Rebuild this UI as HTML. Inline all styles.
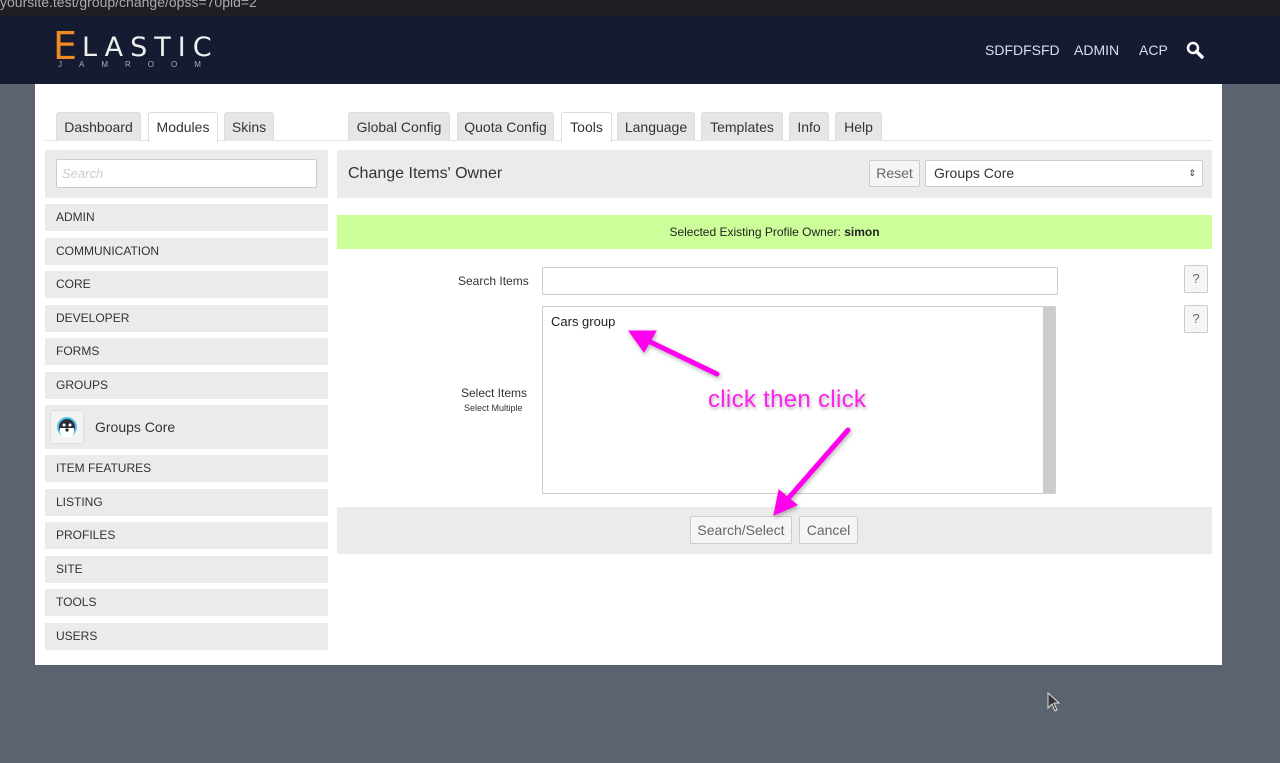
<!DOCTYPE html>
<html><head><meta charset="utf-8"><style>
*{box-sizing:border-box;margin:0;padding:0}
body{width:1280px;height:763px;background:#5c6370;position:relative;overflow:hidden;font-family:"Liberation Sans",sans-serif;font-size:13px;color:#333}
.a{position:absolute}
.top{left:0;top:0;width:1280px;height:16px;background:#1f1e24;color:#888;font-size:14px;overflow:hidden}
.hdr{left:0;top:16px;width:1280px;height:68px;background:#151c32}
.nav{color:#dde;font-size:14px;top:42px}
.panel{left:35px;top:84px;width:1187px;height:581px;background:#fff}
.tab{top:112px;height:29px;background:#e6e6e6;border:1px solid #ddd;border-bottom:none;border-radius:3px 3px 0 0;font-size:14px;line-height:28px;text-align:center;color:#333}
.tab.act{background:#fff;height:30px}
.side{left:45px;width:283px;height:27px;background:#ebebeb;font-size:12px;line-height:27px;padding-left:11px;color:#333}
.btn{background:#f5f5f5;border:1px solid #ccc;border-radius:2px;color:#666;text-align:center;font-size:14px}
.inp{background:#fff;border:1px solid #ccc;border-radius:2px}
</style></head><body>
<div class="a top"><span style="position:absolute;left:0;top:-6px;color:#aaa">yoursite.test/group/change/opss=70pid=2</span></div>
<div class="a hdr"></div>
<div class="a" style="left:53px;top:24px;color:#f08a24;font-size:38px;font-family:'DejaVu Sans',sans-serif">E</div>
<div class="a" style="left:82px;top:32px;color:#eee;font-size:27px;letter-spacing:7px;font-family:'DejaVu Sans',sans-serif">LASTIC</div>
<div class="a" style="left:58px;top:60px;color:#aab;font-size:8px;letter-spacing:17px">JAMROOM</div>
<div class="a nav" style="left:985px">SDFDFSFD</div>
<div class="a nav" style="left:1074px">ADMIN</div>
<div class="a nav" style="left:1139px">ACP</div>
<svg class="a" style="left:1186px;top:41px" width="18" height="18" viewBox="0 0 18 18"><circle cx="7" cy="7" r="5" fill="none" stroke="#fff" stroke-width="2.5"/><path d="M10.5 10.5L16 16" stroke="#fff" stroke-width="3.5" stroke-linecap="round"/></svg>
<div class="a panel"></div>
<div class="a" style="left:45px;top:140px;width:1167px;height:1px;background:#e4e4e4"></div>
<div class="a tab" style="left:56px;width:85px">Dashboard</div>
<div class="a tab act" style="left:148px;width:70px">Modules</div>
<div class="a tab" style="left:224px;width:50px">Skins</div>
<div class="a tab" style="left:348px;width:102px">Global Config</div>
<div class="a tab" style="left:457px;width:97px">Quota Config</div>
<div class="a tab act" style="left:561px;width:51px">Tools</div>
<div class="a tab" style="left:617px;width:78px">Language</div>
<div class="a tab" style="left:701px;width:82px">Templates</div>
<div class="a tab" style="left:789px;width:40px">Info</div>
<div class="a tab" style="left:835px;width:47px">Help</div>
<div class="a" style="left:45px;top:150px;width:283px;height:48px;background:#ebebeb"></div>
<div class="a inp" style="left:56px;top:159px;width:261px;height:29px;color:#ccc;font-size:13px;padding:6px 5px;font-style:italic">Search</div>
<div class="a side" style="top:204px">ADMIN</div>
<div class="a side" style="top:238px">COMMUNICATION</div>
<div class="a side" style="top:271px">CORE</div>
<div class="a side" style="top:305px">DEVELOPER</div>
<div class="a side" style="top:338px">FORMS</div>
<div class="a side" style="top:372px">GROUPS</div>
<div class="a side" style="top:405px;height:44px;font-size:14px;line-height:44px;padding-left:50px">Groups Core</div>
<div class="a" style="left:50px;top:410px;width:34px;height:34px;background:#f3f3f3;border:1px solid #ddd;border-radius:3px"></div>
<svg class="a" style="left:57px;top:417px" width="20" height="20" viewBox="0 0 20 20"><circle cx="10" cy="10" r="9" fill="#2a2f3a" stroke="#5bc0eb" stroke-width="2"/><path d="M3 11h14v3a7 7 0 0 1-14 0z" fill="#fff"/><circle cx="7" cy="8" r="1.5" fill="#fff"/><circle cx="13" cy="8" r="1.5" fill="#fff"/><circle cx="10" cy="13" r="1.6" fill="#222"/></svg>
<div class="a side" style="top:455px">ITEM FEATURES</div>
<div class="a side" style="top:489px">LISTING</div>
<div class="a side" style="top:522px">PROFILES</div>
<div class="a side" style="top:556px">SITE</div>
<div class="a side" style="top:589px">TOOLS</div>
<div class="a side" style="top:623px">USERS</div>
<div class="a" style="left:337px;top:150px;width:875px;height:48px;background:#ebebeb"></div>
<div class="a" style="left:348px;top:165px;font-size:16px;color:#333">Change Items' Owner</div>
<div class="a btn" style="left:869px;top:160px;width:51px;height:27px;line-height:25px">Reset</div>
<div class="a inp" style="left:925px;top:160px;width:278px;height:27px;font-size:14px;line-height:25px;padding-left:8px;color:#333">Groups Core<span style="position:absolute;right:6px;top:0;font-size:9px">&#8661;</span></div>
<div class="a" style="left:337px;top:215px;width:875px;height:34px;background:#ccff99;text-align:center;line-height:34px;font-size:12px;color:#222">Selected Existing Profile Owner: <b>simon</b></div>
<div class="a" style="left:458px;top:274px;font-size:12px">Search Items</div>
<div class="a inp" style="left:542px;top:267px;width:516px;height:28px"></div>
<div class="a btn" style="left:1184px;top:265px;width:24px;height:28px;line-height:26px;font-size:13px">?</div>
<div class="a btn" style="left:1184px;top:305px;width:24px;height:28px;line-height:26px;font-size:13px">?</div>
<div class="a" style="left:461px;top:386px;font-size:12px">Select Items</div>
<div class="a" style="left:464px;top:403px;font-size:9px">Select Multiple</div>
<div class="a inp" style="left:542px;top:306px;width:514px;height:188px"></div>
<div class="a" style="left:1043px;top:307px;width:12px;height:186px;background:#cccccc"></div>
<div class="a" style="left:551px;top:314px;font-size:13px;color:#222">Cars group</div>
<div class="a" style="left:337px;top:507px;width:875px;height:47px;background:#ebebeb"></div>
<div class="a btn" style="left:690px;top:516px;width:102px;height:28px;line-height:26px">Search/Select</div>
<div class="a btn" style="left:799px;top:516px;width:59px;height:28px;line-height:26px">Cancel</div>
<div class="a" style="left:708px;top:386px;font-size:24px;letter-spacing:0.3px;color:#ff22ee;text-shadow:1px 2px 3px rgba(0,0,0,.3)">click then click</div>
<svg class="a" style="left:620px;top:320px" width="260" height="210" viewBox="620 320 260 210">
<g fill="#ff00ee" stroke="#ff00ee" stroke-linecap="round" style="filter:drop-shadow(1px 2px 2px rgba(0,0,0,.3))">
<path d="M717 374L642 338" stroke-width="5" fill="none"/><path d="M629 331L656 331L644 352z"/>
<path d="M848 430L785 502" stroke-width="5" fill="none"/><path d="M774 515L779 490L797 505z"/></g></svg>
<svg class="a" style="left:1047px;top:692px" width="14" height="22" viewBox="0 0 14 22"><path d="M1 1L1 16L5 12L8 19L10 18L7 11L12 11z" fill="#333" stroke="#ddd" stroke-width="1"/></svg>
</body></html>
